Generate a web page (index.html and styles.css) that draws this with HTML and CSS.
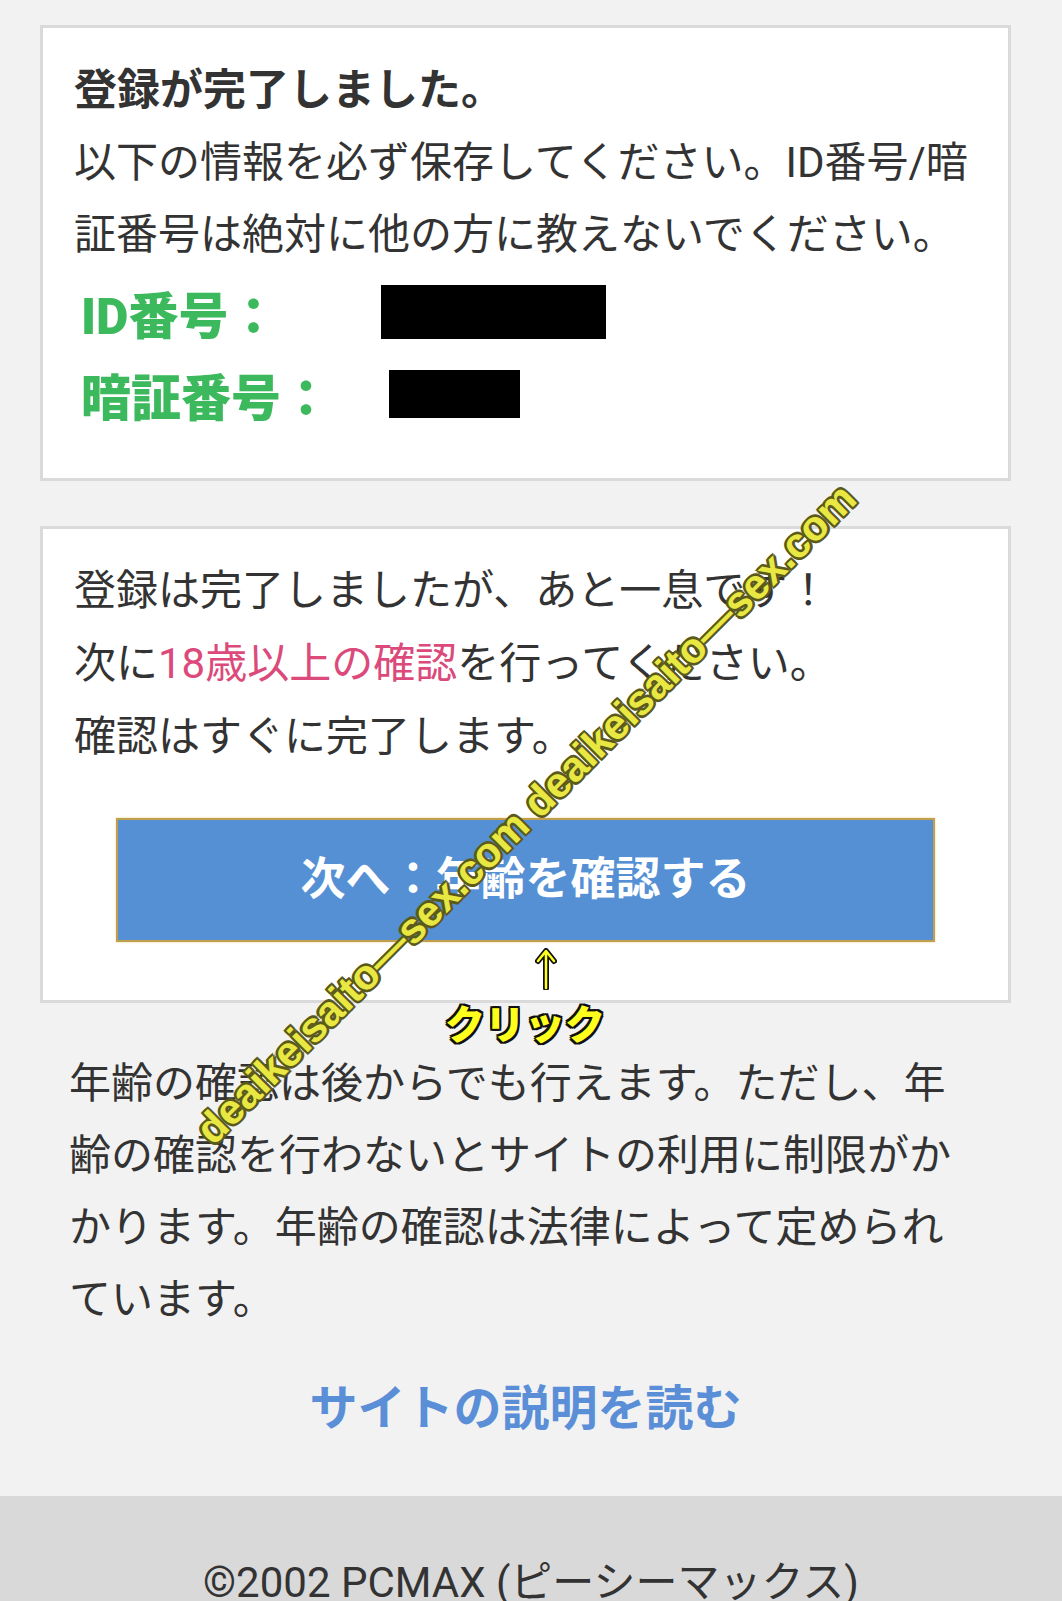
FILE: index.html
```html
<!DOCTYPE html>
<html lang="ja">
<head>
  <meta charset="UTF-8">
  <title>登録完了 | PCMAX</title>
  <meta name="viewport" content="width=device-width, initial-scale=1.0">
  <link rel="stylesheet" href="styles.css">
</head>
<body>

  <div class="page">
    <div class="box">
      <h1>登録が完了しました。</h1>
      <p class="text">以下の情報を必ず保存してください。ID番号/暗証番号は絶対に他の方に教えないでください。</p>
      <div class="info-row">
        <span class="label">ID番号：</span>
        <span class="mask mask-id"></span>
      </div>
      <div class="info-row">
        <span class="label">暗証番号：</span>
        <span class="mask mask-pin"></span>
      </div>
    </div>

    <div class="box box-next">
      <p class="text">登録は完了しましたが、あと一息です！<br>次に<span class="pink">18歳以上の確認</span>を行ってください。<br>確認はすぐに完了します。</p>
      <a class="btn" href="#">次へ：年齢を確認する</a>
    </div>

    <p class="note">年齢の確認は後からでも行えます。ただし、年齢の確認を行わないとサイトの利用に制限がかかります。年齢の確認は法律によって定められています。</p>

    <div class="more">
      <a href="#">サイトの説明を読む</a>
    </div>

    <!-- annotations drawn over the screenshot -->
    <svg class="mark-arrow" width="22" height="42" viewBox="0 0 22 42">
      <path d="M11 40V4M3 13L11 3L19 13" fill="none" stroke="#111" stroke-width="6" stroke-linecap="round" stroke-linejoin="round"/>
      <path d="M11 40V4M3 13L11 3L19 13" fill="none" stroke="#ffff1e" stroke-width="2.5" stroke-linecap="round" stroke-linejoin="round"/>
    </svg>
    <div class="mark-click">クリック</div>
    <div class="watermark"><span>deaikeisaito—sex.com</span> <span>deaikeisaito—sex.com</span></div>
  </div>

  <div class="footer">©2002 PCMAX (ピーシーマックス)</div>

</body>
</html>
```

FILE: styles.css
```css
body {
  margin: 0;
  background: #f2f2f2;
  font-family: Roboto, "Noto Sans CJK JP", sans-serif;
  color: #333;
}

.page {
  position: relative;
  padding: 25px 51px 40px 40px;
}

.box {
  background: #fff;
  border: 3px solid #dadada;
  padding: 25px 31px 43px;
}

.box h1 {
  margin: 0;
  font-size: 43px;
  line-height: 74px;
  font-weight: bold;
  color: #333;
}

.text {
  margin: 0;
  font-size: 42px;
  line-height: 72px;
}

.info-row {
  display: flex;
  align-items: center;
  height: 82px;
}

.label {
  width: 300px;
  padding-left: 7px;
  box-sizing: border-box;
  font-size: 50px;
  font-weight: 900;
  color: #3cb95c;
}

.mask {
  display: block;
  background: #000;
}

.mask-id {
  margin-left: 7px;
  width: 225px;
  height: 54px;
}

.mask-pin {
  margin-left: 15px;
  width: 131px;
  height: 48px;
}

.box-next {
  margin-top: 45px;
  padding-bottom: 58px;
}

.box-next .text {
  line-height: 73px;
}

.pink {
  color: #db4a7b;
}

.btn {
  display: block;
  box-sizing: border-box;
  width: 819px;
  height: 124px;
  margin: 45px auto 0;
  background: #5590d5;
  border: 2px solid #c29f4c;
  box-shadow: 0 0 2px #e6cf8c;
  color: #fff;
  font-size: 45px;
  font-weight: bold;
  line-height: 120px;
  text-align: center;
  text-decoration: none;
}

.note {
  margin: 45px 0 0;
  padding: 0 29px;
  font-size: 42px;
  line-height: 72px;
}

.more {
  margin-top: 37px;
  text-align: center;
  line-height: 72px;
}

.more a {
  font-size: 48px;
  font-weight: bold;
  color: #5a8fd8;
  text-decoration: none;
}

.footer {
  background: #d9d9d9;
  padding: 62px 0 40px;
  text-align: center;
  font-size: 42px;
  line-height: 50px;
  color: #333;
}

/* overlays */
.mark-arrow {
  position: absolute;
  left: 535px;
  top: 948px;
}

.mark-click {
  position: absolute;
  left: 445px;
  top: 1006px;
  width: 160px;
  text-align: center;
  font-size: 40px;
  line-height: 1;
  font-weight: 900;
  color: #ffff1e;
  text-shadow: -2px -2px 0 #111, 2px -2px 0 #111, -2px 2px 0 #111, 2px 2px 0 #111,
    0 -2px 0 #111, 0 2px 0 #111, -2px 0 0 #111, 2px 0 0 #111;
}

.watermark {
  position: absolute;
  left: 526px;
  top: 814px;
  transform: translate(-50%, -50%) rotate(-45deg);
  white-space: nowrap;
  font-family: "Liberation Sans", sans-serif;
  font-size: 42px;
  line-height: 1;
  font-weight: bold;
  color: #e9e842;
  text-shadow: -2px -2px 0 #5b5a1c, 2px -2px 0 #5b5a1c, -2px 2px 0 #5b5a1c, 2px 2px 0 #5b5a1c,
    0 -2px 0 #5b5a1c, 0 2px 0 #5b5a1c, -2px 0 0 #5b5a1c, 2px 0 0 #5b5a1c;
}
```
